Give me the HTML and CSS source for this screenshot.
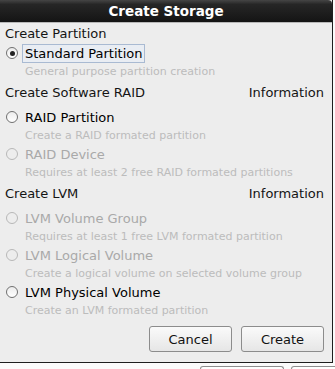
FILE: index.html
```html
<!DOCTYPE html>
<html lang="en">
<head>
    <meta charset="UTF-8">
    <title>Create Storage</title>
    <link rel="stylesheet" href="styles.css">
</head>
<body>
    <div class="dialog">
        <div class="titlebar">Create Storage</div>
        <div class="content">
            <div class="section">
                <div class="header">Create Partition</div>
                <div class="option checked">
                    <span class="radio"></span>
                    <span class="label focus">Standard Partition</span>
                </div>
                <div class="desc">General purpose partition creation</div>
            </div>

            <div class="section">
                <div class="header split">
                    <span>Create Software RAID</span>
                    <span>Information</span>
                </div>
                <div class="option">
                    <span class="radio"></span>
                    <span class="label">RAID Partition</span>
                </div>
                <div class="desc">Create a RAID formated partition</div>
                <div class="option disabled">
                    <span class="radio"></span>
                    <span class="label">RAID Device</span>
                </div>
                <div class="desc">Requires at least 2 free RAID formated partitions</div>
            </div>

            <div class="section">
                <div class="header split">
                    <span>Create LVM</span>
                    <span>Information</span>
                </div>
                <div class="option disabled">
                    <span class="radio"></span>
                    <span class="label">LVM Volume Group</span>
                </div>
                <div class="desc">Requires at least 1 free LVM formated partition</div>
                <div class="option disabled">
                    <span class="radio"></span>
                    <span class="label">LVM Logical Volume</span>
                </div>
                <div class="desc">Create a logical volume on selected volume group</div>
                <div class="option">
                    <span class="radio"></span>
                    <span class="label">LVM Physical Volume</span>
                </div>
                <div class="desc">Create an LVM formated partition</div>
            </div>

            <div class="buttons">
                <button class="button">Cancel</button>
                <button class="button">Create</button>
            </div>
        </div>
    </div>
    <div class="behind">
        <span class="behind-button"></span>
        <span class="behind-button"></span>
    </div>
</body>
</html>
```

FILE: styles.css
```css
body {
    margin: 0;
    width: 335px;
    height: 369px;
    overflow: hidden;
    background: #fbfbfb;
    font-family: 'DejaVu Sans', 'Noto Sans', sans-serif;
    font-size: 13px;
    color: #111;
}
.dialog {
    width: 332px;
    background: #ededed;
    border-right: 1px solid #1e1e1e;
    border-bottom: 1px solid #1e1e1e;
}
.titlebar {
    height: 22px;
    line-height: 22px;
    text-align: center;
    font-weight: bold;
    font-size: 13.5px;
    color: #fff;
    background: linear-gradient(#454545 0%, #262626 20%, #141414 100%);
    border-bottom: 1px solid #b8b8b8;
    border-top-right-radius: 4px;
}
.content {
    padding: 1px 8px 10px 5px;
}
.section + .section {
    margin-top: 2px;
}
.header {
    height: 20px;
    line-height: 20px;
    color: #141414;
}
.header.split {
    display: flex;
    justify-content: space-between;
    margin-bottom: 5px;
}
.option {
    height: 18px;
    display: flex;
    align-items: center;
    color: #000;
}
.radio {
    width: 12px;
    height: 12px;
    margin-left: 1px;
    margin-right: 4px;
    box-sizing: border-box;
    border: 1px solid #707070;
    border-radius: 50%;
    background: linear-gradient(#ececec, #ffffff);
    display: flex;
    align-items: center;
    justify-content: center;
}
.checked .radio::after {
    content: '';
    width: 5px;
    height: 5px;
    border-radius: 50%;
    background: #222;
}
.label {
    padding: 1px 2px;
    border: 1px solid transparent;
}
.label.focus {
    border-color: #a9bad2;
    background: #e9edf3;
}
.disabled {
    color: #a9a9a9;
}
.disabled .radio {
    border-color: #b8b8b8;
    background: #ededed;
}
.desc {
    height: 19px;
    line-height: 19px;
    padding-left: 20px;
    font-size: 11px;
    color: #bcbcbc;
}
.buttons {
    display: flex;
    justify-content: flex-end;
    gap: 9px;
    margin-top: 6px;
}
.button {
    width: 83px;
    height: 26px;
    padding: 0;
    font-family: inherit;
    font-size: 13px;
    color: #111;
    border: 1px solid #8c8c8c;
    border-radius: 3px;
    background: linear-gradient(#fafafa, #e6e6e6);
}
.behind {
    display: flex;
    gap: 7px;
    padding-left: 200px;
    margin-top: 3px;
    overflow: hidden;
}
.behind-button {
    flex: none;
    width: 82px;
    height: 10px;
    border: 1px solid #8e8e8e;
    border-bottom: none;
    border-radius: 3px 3px 0 0;
    background: #fff;
}
```
